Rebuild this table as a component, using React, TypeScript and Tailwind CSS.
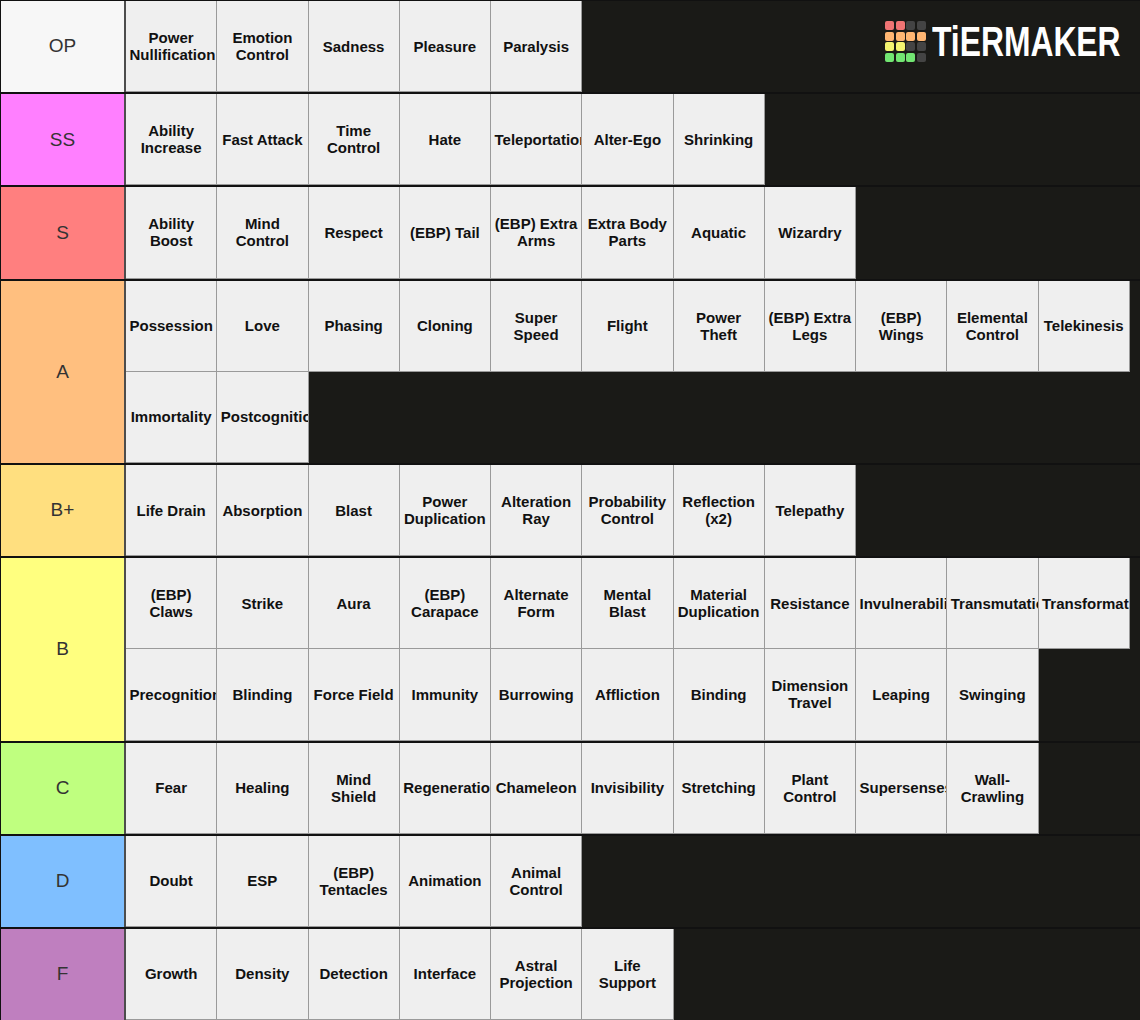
import React from "react";

interface Tier {
    label: string;
    color: string;
    items: string[];
}

const tiers: Tier[] = [
    {label: "OP", color: "bg-[#f7f7f7]", items: ["Power Nullification", "Emotion Control", "Sadness", "Pleasure", "Paralysis"]},
    {label: "SS", color: "bg-[#ff7fff]", items: ["Ability Increase", "Fast Attack", "Time Control", "Hate", "Teleportation", "Alter-Ego", "Shrinking"]},
    {label: "S", color: "bg-[#ff7f7f]", items: ["Ability Boost", "Mind Control", "Respect", "(EBP) Tail", "(EBP) Extra Arms", "Extra Body Parts", "Aquatic", "Wizardry"]},
    {
        label: "A",
        color: "bg-[#ffbf7f]",
        items: ["Possession", "Love", "Phasing", "Cloning", "Super Speed", "Flight", "Power Theft", "(EBP) Extra Legs", "(EBP) Wings", "Elemental Control", "Telekinesis", "Immortality", "Postcognition"],
    },
    {label: "B+", color: "bg-[#ffdf7f]", items: ["Life Drain", "Absorption", "Blast", "Power Duplication", "Alteration Ray", "Probability Control", "Reflection (x2)", "Telepathy"]},
    {
        label: "B",
        color: "bg-[#ffff7f]",
        items: [
            "(EBP) Claws", "Strike", "Aura", "(EBP) Carapace", "Alternate Form", "Mental Blast", "Material Duplication", "Resistance", "Invulnerability", "Transmutation", "Transformation",
            "Precognition", "Blinding", "Force Field", "Immunity", "Burrowing", "Affliction", "Binding", "Dimension Travel", "Leaping", "Swinging",
        ],
    },
    {label: "C", color: "bg-[#bfff7f]", items: ["Fear", "Healing", "Mind Shield", "Regeneration", "Chameleon", "Invisibility", "Stretching", "Plant Control", "Supersenses", "Wall-Crawling"]},
    {label: "D", color: "bg-[#7fbfff]", items: ["Doubt", "ESP", "(EBP) Tentacles", "Animation", "Animal Control"]},
    {label: "F", color: "bg-[#bf7fbf]", items: ["Growth", "Density", "Detection", "Interface", "Astral Projection", "Life Support"]},
];

// logo squares, row by row
const logoCells: string[] = [
    "bg-[#f07474]", "bg-[#f07474]", "bg-[#444444]", "bg-[#444444]",
    "bg-[#ffb672]", "bg-[#ffb672]", "bg-[#ffb672]", "bg-[#ffb672]",
    "bg-[#f4f470]", "bg-[#f4f470]", "bg-[#444444]", "bg-[#444444]",
    "bg-[#72e672]", "bg-[#72e672]", "bg-[#72e672]", "bg-[#444444]",
];

function Logo(): React.JSX.Element {
    return (
        <div className="absolute left-[884px] top-[20px] flex items-center gap-[6px]">
            <div className="grid grid-cols-4 gap-[1.5px]">
                {logoCells.map((c, i) => (
                    <div key={i} className={`h-[9px] w-[9px] rounded-[2px] ${c}`}/>
                ))}
            </div>
            <div className="h-[40px] w-[190px] overflow-visible">
                <span
                    className="inline-block origin-left scale-x-[0.74] text-[43px] font-bold leading-[40px] text-white"
                    style={{fontFamily: '"Liberation Sans", Arial, sans-serif'}}
                >
                    TiERMAKER
                </span>
            </div>
        </div>
    );
}

export default function App(): React.JSX.Element {
    return (
        <div
            className="relative h-[1020px] w-[1140px] overflow-hidden border-l border-t border-[#111111] bg-[#1a1a17]"
            style={{fontFamily: '"Liberation Sans", Arial, sans-serif'}}
        >
            {tiers.map((tier) => (
                <div key={tier.label} className="flex border-b-2 border-[#111111]">
                    <div className={`flex w-[125px] shrink-0 items-center justify-center border-r-2 border-[#4d4d4d] text-[19px] text-[#333333] ${tier.color}`}>
                        {tier.label}
                    </div>
                    <div className="flex min-h-[91px] flex-1 flex-wrap content-start">
                        {tier.items.map((item) => (
                            <div
                                key={item}
                                className="flex h-[91.2px] w-[91.25px] items-center justify-center overflow-hidden border-b border-r border-[#9a9a9a] bg-[#efefef] px-[3.5px] text-center text-[15px] font-bold leading-[17px] text-[#111111]"
                            >
                                <span className="block w-full">{item}</span>
                            </div>
                        ))}
                    </div>
                </div>
            ))}
            <Logo/>
        </div>
    );
}
